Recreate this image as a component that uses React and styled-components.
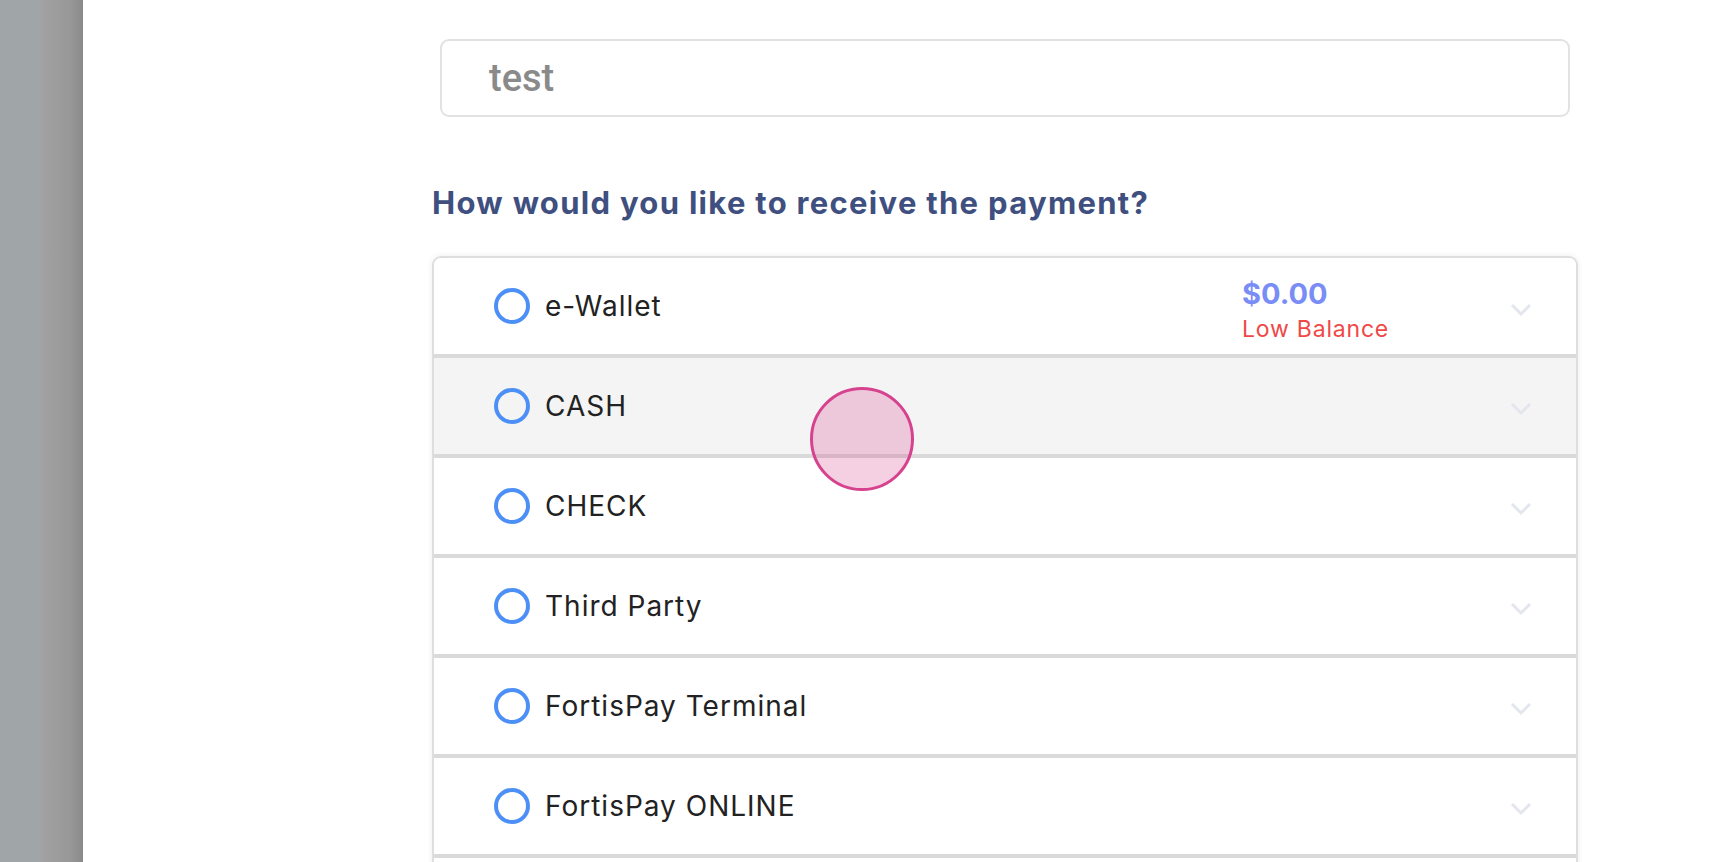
import React from 'react'
import styled, { createGlobalStyle } from 'styled-components'

const GlobalStyle = createGlobalStyle`
  html, body {
    margin: 0;
    padding: 0;
    background: #ffffff;
    font-family: Inter, 'Noto Sans', sans-serif;
  }
  * {
    box-sizing: border-box;
  }
`

const Page = styled.div`
  display: flex;
  height: 100vh;
  overflow: hidden;
`

const Backdrop = styled.div`
  width: 83px;
  flex-shrink: 0;
  background: linear-gradient(
    to right,
    #a0a5a8 0,
    #a0a5a8 41px,
    #a2a2a2 41px,
    #989898 70px,
    #8a8a8a 83px
  );
`

const Main = styled.main`
  flex: 1;
  padding: 39px 150px 0 349px;
`

const SearchField = styled.div`
  height: 78px;
  margin: 0 8px;
  border: 2px solid #e2e2e2;
  border-radius: 9px;
  display: flex;
  align-items: center;
  padding-left: 47px;
  font-family: Roboto, 'Liberation Sans', sans-serif;
  font-weight: 500;
  font-size: 38px;
  color: #8a8a8a;
`

const Heading = styled.h2`
  margin: 66px 0 33px;
  font-size: 31px;
  line-height: 40px;
  font-weight: 700;
  color: #3e4f80;
  letter-spacing: 1.3px;
`

const Card = styled.div`
  position: relative;
  border: 2px solid #dedede;
  border-bottom: none;
  border-radius: 9px 9px 0 0;
  box-shadow: 0 0 6px rgba(0, 0, 0, 0.08);
  padding-bottom: 40px;
  overflow: hidden;
`

const Row = styled.div`
  height: 100px;
  display: flex;
  align-items: center;
  padding: 0 44px 0 60px;
  background: ${(p) => (p.$hover ? '#f4f4f4' : '#ffffff')};
  border-bottom: 4px solid #dadada;
`

const Radio = styled.span`
  width: 36px;
  height: 36px;
  flex-shrink: 0;
  border: 4px solid #4c8ff6;
  border-radius: 50%;
  margin-right: 15px;
`

const Label = styled.span`
  flex: 1;
  font-size: 28px;
  color: #222222;
  letter-spacing: 1px;
`

const Balance = styled.div`
  display: flex;
  flex-direction: column;
  width: 230px;
  margin-right: 38px;
  margin-top: 12px;
`

const Amount = styled.span`
  font-size: 29px;
  line-height: 34px;
  font-weight: 700;
  color: #7a8df6;
`

const Warning = styled.span`
  font-size: 23px;
  line-height: 36px;
  color: #f04848;
  letter-spacing: 0.8px;
`

const Chevron = styled.svg`
  width: 22px;
  height: 14px;
  flex-shrink: 0;
  margin-top: ${(p) => (p.$offset ? '8px' : '6px')};
`

const Touch = styled.div`
  position: absolute;
  left: 862px;
  top: 439px;
  width: 104px;
  height: 104px;
  margin: -52px 0 0 -52px;
  border-radius: 50%;
  border: 3px solid #d6428e;
  background: rgba(214, 66, 142, 0.25);
  pointer-events: none;
`

const methods = [
  { name: 'e-Wallet', balance: '$0.00' },
  { name: 'CASH', hover: true },
  { name: 'CHECK' },
  { name: 'Third Party' },
  { name: 'FortisPay Terminal' },
  { name: 'FortisPay ONLINE' },
]

function Arrow({ offset }) {
  return (
    <Chevron $offset={offset} viewBox="0 0 22 14">
      <polyline
        points="2,2 11,11 20,2"
        fill="none"
        stroke="#e3e6ed"
        strokeWidth="3"
      />
    </Chevron>
  )
}

export default function App() {
  return (
    <Page>
      <GlobalStyle />
      <Backdrop />
      <Main>
        <SearchField>test</SearchField>
        <Heading>How would you like to receive the payment?</Heading>
        <Card>
          {methods.map((m) => (
            <Row key={m.name} $hover={m.hover}>
              <Radio />
              <Label>{m.name}</Label>
              {m.balance && (
                <Balance>
                  <Amount>{m.balance}</Amount>
                  <Warning>Low Balance</Warning>
                </Balance>
              )}
              <Arrow offset={!!m.balance} />
            </Row>
          ))}
        </Card>
      </Main>
      <Touch />
    </Page>
  )
}
